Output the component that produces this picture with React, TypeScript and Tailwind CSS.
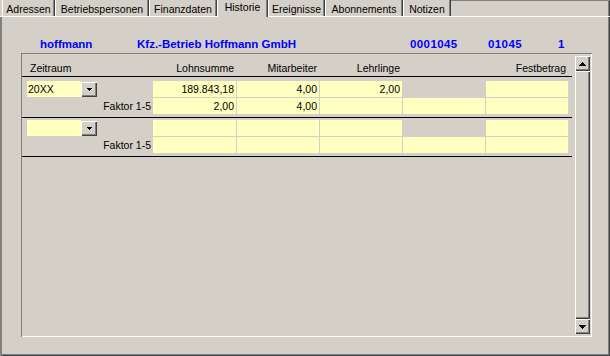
import type { ReactNode } from 'react';

const raised = 'shadow-[inset_1px_1px_0_#ffffff,inset_-1px_-1px_0_#404040,inset_-2px_-2px_0_#808080]';
const yellow = 'bg-[#ffffc0]';

const tabs = [
  { label: 'Adressen', width: 'w-[53px]' },
  { label: 'Betriebspersonen', width: 'w-[94px]' },
  { label: 'Finanzdaten', width: 'w-[68px]' },
  { label: 'Historie', width: 'w-[51px]', active: true },
  { label: 'Ereignisse', width: 'w-[57px]' },
  { label: 'Abonnements', width: 'w-[78px]' },
  { label: 'Notizen', width: 'w-[48px]' },
];

function Triangle({ up = false, small = false }: { up?: boolean; small?: boolean }) {
  const d = small ? 'M0 0H5V1H4V2H3V3H2V2H1V1H0Z' : 'M0 0H7V1H6V2H5V3H4V4H3V3H2V2H1V1H0Z';
  return (
    <svg
      width={small ? 5 : 7}
      height={small ? 3 : 4}
      viewBox={small ? '0 0 5 3' : '0 0 7 4'}
      shapeRendering="crispEdges"
      className={up ? 'rotate-180' : ''}
    >
      <path d={d} fill="#000000" />
    </svg>
  );
}

function Cell({ value, empty = false, className = '' }: { value?: string; empty?: boolean; className?: string }) {
  return (
    <div className={`h-[16px] shrink-0 pr-[2px] text-right leading-[16px] ${empty ? '' : yellow} ${className}`}>
      {value}
    </div>
  );
}

function Row({ left, cells }: { left: ReactNode; cells: { value?: string; empty?: boolean }[] }) {
  const widths = ['w-[83px]', 'ml-px w-[82px]', 'ml-px w-[82px]', 'ml-px w-[82px]', 'ml-px w-[82px]'];
  return (
    <div className="flex h-[16px] pl-[5px]">
      <div className="w-[126px] shrink-0">{left}</div>
      {cells.map((cell, i) => (
        <Cell key={i} value={cell.value} empty={cell.empty} className={widths[i]} />
      ))}
    </div>
  );
}

function Combo({ value }: { value?: string }) {
  return (
    <div className="flex h-[16px] w-[70px]">
      <div className={`h-[16px] w-[54px] pl-[1px] leading-[16px] ${yellow}`}>{value}</div>
      <div className={`mt-px flex h-[15px] w-[16px] items-center justify-center bg-[#d4d0c8] ${raised}`}>
        <Triangle small />
      </div>
    </div>
  );
}

function Faktor() {
  return <div className="pr-[2px] text-right leading-[16px]">Faktor 1-5</div>;
}

export default function App() {
  return (
    <div className="flex h-[356px] w-[610px] flex-col overflow-hidden bg-[#d4d0c8] font-['Liberation_Sans',Arial,sans-serif] text-[10.5px] leading-[12px] text-black">
      {/* tab strip */}
      <div className="flex h-[16px] items-start pl-[2px]">
        {tabs.map((tab) =>
          tab.active ? (
            <div
              key={tab.label}
              className={`relative z-10 h-[17px] shrink-0 bg-[#d4d0c8] pt-[1px] text-center ${tab.width} shadow-[inset_1px_0_0_#ffffff,inset_-1px_0_0_#404040,inset_-2px_0_0_#808080]`}
            >
              {tab.label}
            </div>
          ) : (
            <div
              key={tab.label}
              className={`h-[16px] shrink-0 pt-[3px] text-center ${tab.width} shadow-[inset_1px_0_0_#ffffff,inset_-1px_0_0_#404040,inset_-2px_0_0_#808080]`}
            >
              {tab.label}
            </div>
          ),
        )}
        <div className="h-[16px] flex-1 shadow-[inset_0_1px_0_#808080,inset_-1px_0_0_#404040,inset_-2px_0_0_#808080]" />
      </div>

      {/* page */}
      <div className="flex flex-1 flex-col pt-[21px] shadow-[inset_0_1px_0_#ffffff,inset_2px_0_0_#808080,inset_-1px_-1px_0_#404040,inset_-2px_-2px_0_#808080]">
        <div className="flex h-[14px] pl-[40px] text-[11.5px] font-bold leading-[14px] text-[#0000ff]">
          <div className="w-[97px] shrink-0">hoffmann</div>
          <div className="w-[273px] shrink-0">Kfz.-Betrieb Hoffmann GmbH</div>
          <div className="w-[78px] shrink-0 tracking-[0.4px]">0001045</div>
          <div className="w-[70px] shrink-0 tracking-[0.4px]">01045</div>
          <div className="shrink-0">1</div>
        </div>

        <div className="ml-[21px] mt-[2px] flex h-[284px] w-[571px] p-px shadow-[inset_1px_1px_0_#808080,inset_-1px_-1px_0_#ffffff]">
          <div className="flex w-[553px] shrink-0 flex-col">
            <div className="flex h-[22px] pl-[5px] pt-[8px]">
              <div className="w-[126px] shrink-0 pl-[3px]">Zeitraum</div>
              <div className="w-[83px] shrink-0 pr-[2px] text-right">Lohnsumme</div>
              <div className="ml-px w-[82px] shrink-0 pr-[2px] text-right">Mitarbeiter</div>
              <div className="ml-px w-[82px] shrink-0 pr-[2px] text-right">Lehrlinge</div>
              <div className="ml-px w-[82px] shrink-0" />
              <div className="ml-px w-[82px] shrink-0 pr-[2px] text-right">Festbetrag</div>
            </div>
            <div className="h-px w-[550px] bg-black" />

            <div className="mt-[4px]">
              <Row
                left={<Combo value="20XX" />}
                cells={[{ value: '189.843,18' }, { value: '4,00' }, { value: '2,00' }, { empty: true }, {}]}
              />
            </div>
            <div className="mt-px">
              <Row left={<Faktor />} cells={[{ value: '2,00' }, { value: '4,00' }, {}, {}, {}]} />
            </div>
            <div className="mt-[3px] h-px w-[550px] bg-black" />

            <div className="mt-[2px]">
              <Row left={<Combo />} cells={[{}, {}, {}, { empty: true }, {}]} />
            </div>
            <div className="mt-px">
              <Row left={<Faktor />} cells={[{}, {}, {}, {}, {}]} />
            </div>
            <div className="mt-[3px] h-px w-[550px] bg-black" />
          </div>

          {/* scrollbar */}
          <div className="mt-[2px] flex w-[15px] shrink-0 flex-col self-start">
            <div className={`flex h-[15px] items-center justify-center ${raised}`}>
              <Triangle up />
            </div>
            <div className={`h-[248px] ${raised}`} />
            <div className={`flex h-[15px] items-center justify-center ${raised}`}>
              <Triangle />
            </div>
          </div>
        </div>
      </div>
    </div>
  );
}
